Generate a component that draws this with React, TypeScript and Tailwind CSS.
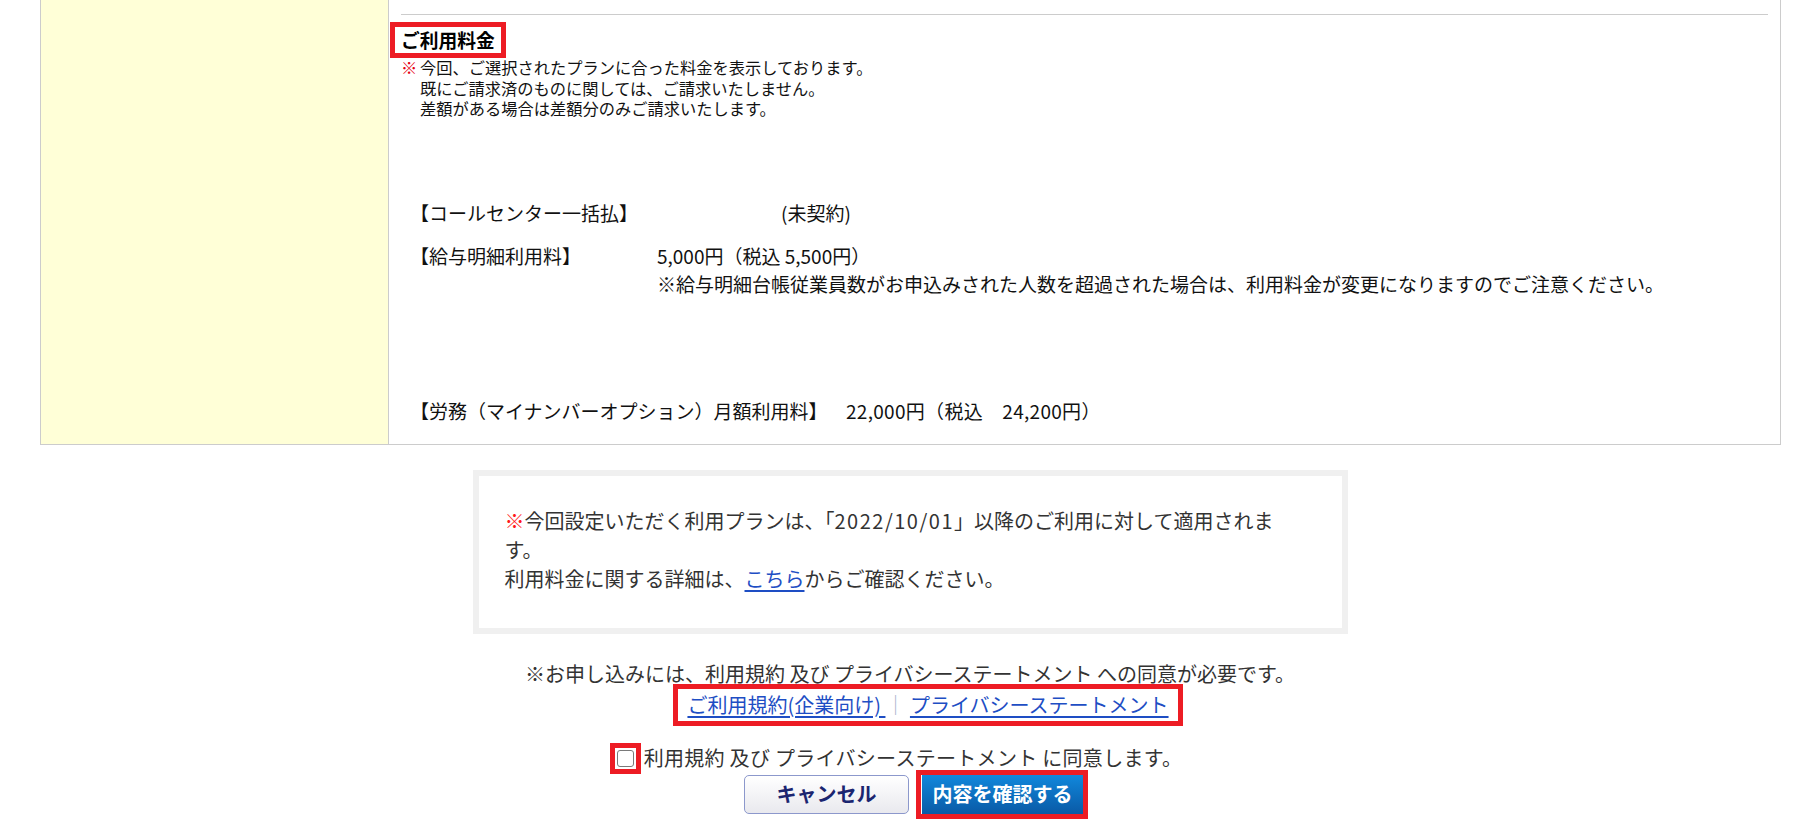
import React from "react";

export default function App() {
  return (
    <div className="w-full h-[831px] overflow-hidden bg-white font-['Noto_Sans_CJK_JP','Liberation_Sans',sans-serif]">
      {/* table section */}
      <div className="ml-[40px] mr-[39px] flex border-x border-b border-[#cccccc]">
        <div className="w-[348px] shrink-0 border-r border-[#cccccc] bg-[#ffffd7]" />
        <div className="flex-1 px-[12px] pt-[14px] pb-[19px] text-[#111]">
          <div className="border-t border-[#cccccc]" />
          <div className="mt-[7px] flex">
            <div className="-ml-[11px] border-[5px] border-[#ed1c24] px-[6px] text-[18.75px] leading-[26px] font-bold text-black">
              ご利用料金
            </div>
          </div>
          <div className="-mt-[1px] flex text-[16.25px] leading-[20.5px]">
            <span className="w-[19px] shrink-0 font-bold text-[#e60012]">※</span>
            <div>
              <div>今回、ご選択されたプランに合った料金を表示しております。</div>
              <div>既にご請求済のものに関しては、ご請求いたしません。</div>
              <div>差額がある場合は差額分のみご請求いたします。</div>
            </div>
          </div>

          <div className="mt-[80px] ml-[9px] flex text-[19px] leading-[28px]">
            <span className="w-[371px] shrink-0">【コールセンター一括払】</span>
            <span>(未契約)</span>
          </div>
          <div className="mt-[15px] ml-[9px] flex text-[19px] leading-[28px]">
            <span className="w-[247px] shrink-0">【給与明細利用料】</span>
            <div>
              <div>5,000円（税込 5,500円）</div>
              <div>※給与明細台帳従業員数がお申込みされた人数を超過された場合は、利用料金が変更になりますのでご注意ください。</div>
            </div>
          </div>
          <div className="mt-[99px] ml-[9px] flex text-[19px] leading-[28px]">
            <span className="w-[436px] shrink-0">【労務（マイナンバーオプション）月額利用料】</span>
            <span className="tracking-[0.3px]">22,000円（税込　24,200円）</span>
          </div>
        </div>
      </div>

      {/* notice box */}
      <div className="mx-auto mt-[25px] w-[875px] border-[6px] border-[#f0f0f0] pt-[30px] pb-[35px] pl-[26px] text-[20px] leading-[29px] text-[#333]">
        <div>
          <span className="text-[#ff1a1a]">※</span>今回設定いただく利用プランは、「
          <span className="tracking-[1.5px]">2022/10/01</span>」以降のご利用に対して適用されま
          <br />
          す。
        </div>
        <div>
          利用料金に関する詳細は、
          <a href="#" className="text-[#1e4ec4] underline underline-offset-[3px]">
            こちら
          </a>
          からご確認ください。
        </div>
      </div>

      <div className="mt-[26px] text-center text-[20px] leading-[28px] text-[#333]">
        ※お申し込みには、利用規約 及び プライバシーステートメント への同意が必要です。
      </div>

      <div className="-mt-[4px] flex justify-center pl-[36px]">
        <div className="flex h-[42px] items-center border-[5px] border-[#ed1c24] px-[9px] text-[20px] leading-[32px]">
          <a href="#" className="text-[#1e4ec4] underline underline-offset-[3px]">
            ご利用規約(企業向け)&nbsp;
          </a>
          <span className="text-[#a9b3cc]">｜</span>
          <span>&nbsp;</span>
          <a href="#" className="text-[#1e4ec4] underline underline-offset-[3px]">
            プライバシーステートメント
          </a>
        </div>
      </div>

      <div className="mt-[17px] flex items-center justify-center pr-[28px]">
        <div className="flex h-[31px] w-[31px] items-center justify-center border-[5px] border-[#ed1c24]">
          <input
            type="checkbox"
            className="h-[17px] w-[17px] appearance-none rounded-[3px] border-[1.5px] border-[#7a7a7a] bg-white"
          />
        </div>
        <span className="ml-[3px] text-[20px] leading-[28px] tracking-[0.3px] text-[#333]">
          利用規約 及び プライバシーステートメント に同意します。
        </span>
      </div>

      <div className="-mt-[4px] flex items-center justify-center gap-[7px] pl-[12px]">
        <button className="h-[39px] w-[165px] rounded-[5px] border-[1.5px] border-[#8c98cc] bg-gradient-to-b from-white to-[#e9e9ee] text-[20px] font-bold text-[#1b2570]">
          キャンセル
        </button>
        <div className="border-[5px] border-[#ed1c24] bg-white pl-[1px]">
          <button className="block h-[39px] w-[161px] bg-gradient-to-b from-[#1188dc] to-[#0a5aa6] text-[20px] font-bold text-white">
            内容を確認する
          </button>
        </div>
      </div>
    </div>
  );
}
